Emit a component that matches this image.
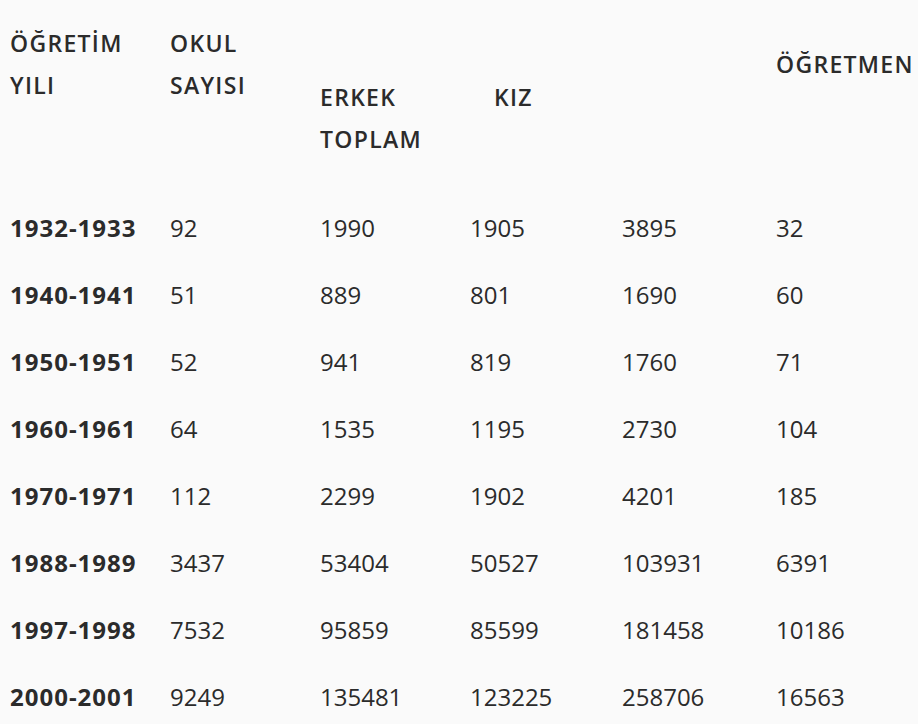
import React from "react";

const rows: string[][] = [
  ["1932-1933", "92", "1990", "1905", "3895", "32"],
  ["1940-1941", "51", "889", "801", "1690", "60"],
  ["1950-1951", "52", "941", "819", "1760", "71"],
  ["1960-1961", "64", "1535", "1195", "2730", "104"],
  ["1970-1971", "112", "2299", "1902", "4201", "185"],
  ["1988-1989", "3437", "53404", "50527", "103931", "6391"],
  ["1997-1998", "7532", "95859", "85599", "181458", "10186"],
  ["2000-2001", "9249", "135481", "123225", "258706", "16563"],
];

const cols = "grid grid-cols-[160px_150px_150px_152px_154px_1fr]";

export default function App() {
  return (
    <div
      className="w-[918px] h-[724px] overflow-hidden bg-[#fafafa] text-[#2b2b2b] pl-[10px]"
      style={{ fontFamily: '"Open Sans", "Noto Sans", sans-serif' }}
    >
      <div className={`${cols} h-[194px] pt-[22px] text-[23px] font-semibold tracking-[1.3px] leading-[42px] whitespace-nowrap`}>
        <div>
          <div>ÖĞRETİM</div>
          <div>YILI</div>
        </div>
        <div>
          <div>OKUL</div>
          <div>SAYISI</div>
        </div>
        <div className="pt-[54px]">
          <div>ERKEK</div>
          <div>TOPLAM</div>
        </div>
        <div className="pt-[54px] pl-[24px]">KIZ</div>
        <div />
        <div className="pt-[21px]">ÖĞRETMEN</div>
      </div>
      {rows.map((r) => (
        <div key={r[0]} className={`${cols} h-[67px] items-center text-[24px] whitespace-nowrap`}>
          {r.map((c, i) => (
            <div key={i} className={i === 0 ? "font-bold tracking-[1px]" : "font-normal"}>
              {c}
            </div>
          ))}
        </div>
      ))}
    </div>
  );
}
